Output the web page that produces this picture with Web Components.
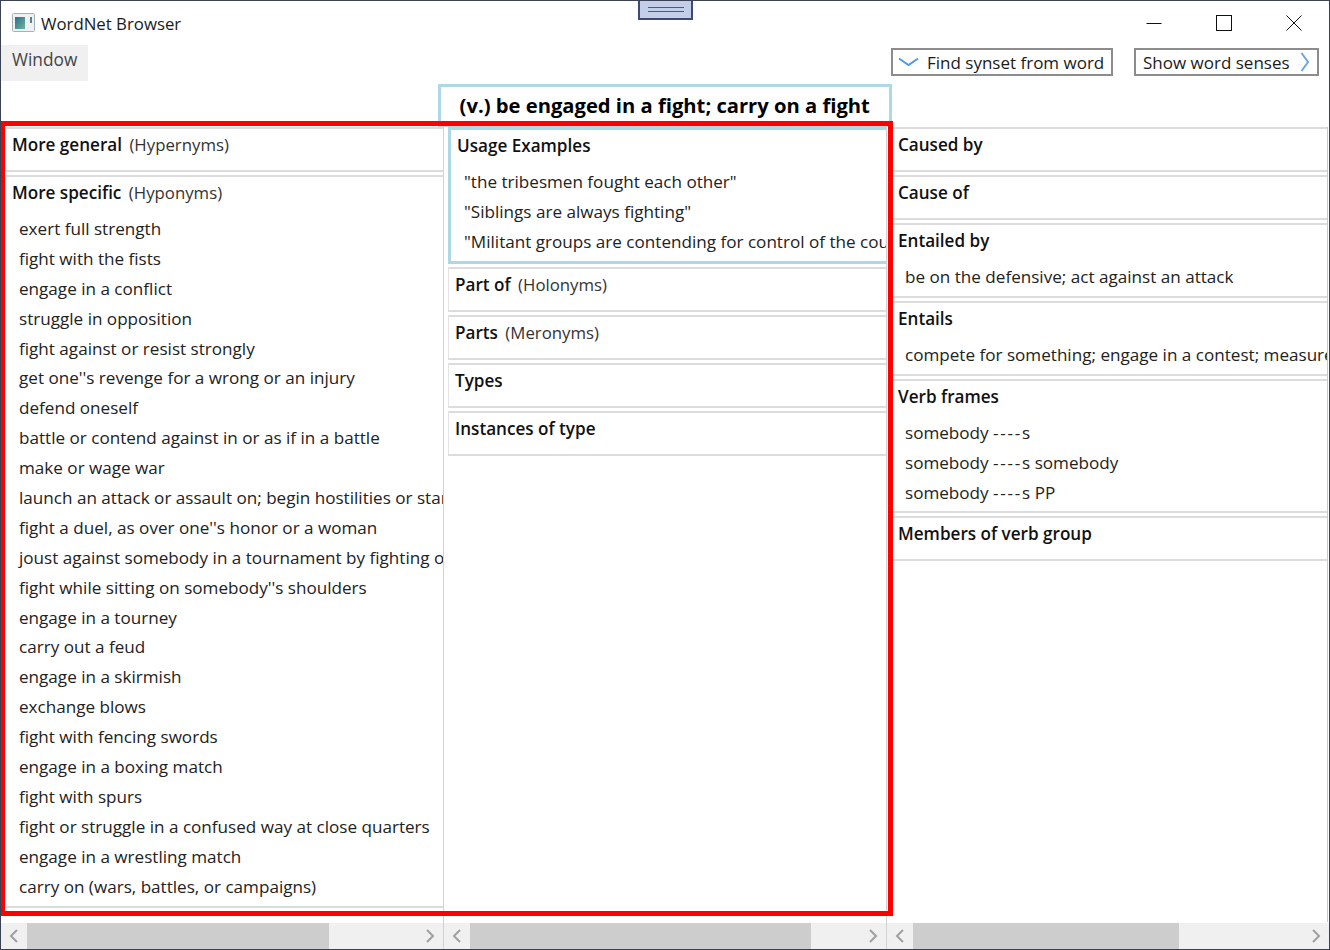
<!DOCTYPE html>
<html><head><meta charset="utf-8"><title>WordNet Browser</title>
<style>
html,body{margin:0;padding:0;background:#fff}
body{font-family:"Open Sans","Noto Sans",sans-serif;font-size:17.1px;color:#1a1a1a}
wb-item span{letter-spacing:1.75px}
</style></head><body>
<wb-app>
  <wb-titlebar slot="title">WordNet Browser</wb-titlebar>
  <wb-toolbar slot="toolbar"></wb-toolbar>
  <wb-col slot="left">
    <wb-section heading="More general" sub="(Hypernyms)"></wb-section>
    <wb-section style="padding-bottom:5px" heading="More specific" sub="(Hyponyms)">
      <wb-item>exert full strength</wb-item><wb-item>fight with the fists</wb-item><wb-item>engage in a conflict</wb-item><wb-item>struggle in opposition</wb-item><wb-item>fight against or resist strongly</wb-item><wb-item>get one''s revenge for a wrong or an injury</wb-item><wb-item>defend oneself</wb-item><wb-item>battle or contend against in or as if in a battle</wb-item><wb-item>make or wage war</wb-item><wb-item>launch an attack or assault on; begin hostilities or start warfare</wb-item><wb-item>fight a duel, as over one''s honor or a woman</wb-item><wb-item>joust against somebody in a tournament by fighting on horseback</wb-item><wb-item>fight while sitting on somebody''s shoulders</wb-item><wb-item>engage in a tourney</wb-item><wb-item>carry out a feud</wb-item><wb-item>engage in a skirmish</wb-item><wb-item>exchange blows</wb-item><wb-item>fight with fencing swords</wb-item><wb-item>engage in a boxing match</wb-item><wb-item>fight with spurs</wb-item><wb-item>fight or struggle in a confused way at close quarters</wb-item><wb-item>engage in a wrestling match</wb-item><wb-item>carry on (wars, battles, or campaigns)</wb-item>
    </wb-section>
  </wb-col>
  <wb-col slot="middle">
    <wb-section highlight heading="Usage Examples">
      <wb-item>"the tribesmen fought each other"</wb-item><wb-item>"Siblings are always fighting"</wb-item><wb-item>"Militant groups are contending for control of the country"</wb-item>
    </wb-section>
    <wb-section heading="Part of" sub="(Holonyms)"></wb-section>
    <wb-section heading="Parts" sub="(Meronyms)"></wb-section>
    <wb-section heading="Types"></wb-section>
    <wb-section heading="Instances of type"></wb-section>
  </wb-col>
  <wb-col slot="right">
    <wb-section heading="Caused by"></wb-section>
    <wb-section heading="Cause of"></wb-section>
    <wb-section heading="Entailed by"><wb-item>be on the defensive; act against an attack</wb-item></wb-section>
    <wb-section heading="Entails"><wb-item>compete for something; engage in a contest; measure oneself against others</wb-item></wb-section>
    <wb-section heading="Verb frames"><wb-item>somebody <span>----</span>s</wb-item><wb-item>somebody <span>----</span>s somebody</wb-item><wb-item>somebody <span>----</span>s PP</wb-item></wb-section>
    <wb-section heading="Members of verb group"></wb-section>
  </wb-col>
</wb-app>
<script>
function def(name, html, init){
  customElements.define(name, class extends HTMLElement{
    constructor(){super();this.attachShadow({mode:'open'}).innerHTML=html;}
    connectedCallback(){if(init)init(this);}
  });
}
def('wb-app',`<style>
:host{display:flex;flex-direction:column;box-sizing:border-box;width:1330px;height:950px;position:relative;overflow:hidden;border:1px solid #3a4152;background:#fff}
.head{height:43px;display:grid;grid-template-columns:437px 453.5px 1fr;flex:none}
.title{font-weight:700;font-size:20.2px;color:#000;box-sizing:border-box;height:43px;border:3px solid #add8e6;text-align:center;line-height:37px;white-space:nowrap}
.cols{flex:1;min-height:0;display:grid;grid-template-columns:443px 443px 1fr}
.handle{position:absolute;left:637px;top:-1px;width:55px;height:20px;box-sizing:border-box;background:#c3cee9;border:2px solid #3e4a75;border-top-width:1px;display:flex;flex-direction:column;justify-content:center;align-items:center}
.handle i{display:block;width:36px;border-top:1px solid #4f5a80;border-bottom:1px solid #4f5a80;box-sizing:border-box;height:5px}
.red{position:absolute;left:-1px;top:120px;width:893px;height:795px;box-sizing:border-box;border:5px solid #f00;pointer-events:none}
</style>
<slot name="title"></slot><slot name="toolbar"></slot>
<div class="head"><div></div><div class="title">(v.) be engaged in a fight; carry on a fight</div><div></div></div>
<div class="cols"><slot name="left"></slot><slot name="middle"></slot><slot name="right"></slot></div>
<div class="handle"><i></i></div>
<div class="red"></div>`);
def('wb-titlebar',`<style>
:host{display:flex;align-items:center;height:44px;flex:none;padding-left:11px;font-size:16.8px;color:#1b1b1b}
svg{display:block}
.ic{margin-right:5px;margin-top:-1px}
.t{flex:1}
.ctl{display:flex;gap:0}
.ctl span{width:70px;display:flex;justify-content:center}
</style>
<svg class="ic" width="24" height="20" viewBox="0 0 24 20"><defs><linearGradient id="g" x1="0" y1="0" x2="1" y2="1"><stop offset="0" stop-color="#2a6f8f"/><stop offset="1" stop-color="#6fb39a"/></linearGradient></defs><rect x=".5" y=".5" width="22" height="18" rx="1" fill="#eef1f3" stroke="#a9b0b5"/><rect x="3" y="4" width="10" height="12" fill="url(#g)"/><rect x="18" y="4" width="2" height="6" fill="#5a7f8d"/></svg>
<span class="t"><slot></slot></span>
<div class="ctl">
<span><svg width="16" height="16" viewBox="0 0 16 16"><path d="M.5 8.5h15" stroke="#111" fill="none"/></svg></span>
<span><svg width="16" height="16" viewBox="0 0 16 16"><rect x=".5" y=".5" width="15" height="15" stroke="#111" fill="none"/></svg></span>
<span><svg width="16" height="16" viewBox="0 0 16 16"><path d="M.5.5l15 15M15.500.5l-15 15" stroke="#111" fill="none"/></svg></span>
</div>`);
def('wb-toolbar',`<style>
:host{display:flex;align-items:flex-start;height:39px;flex:none;position:relative}
.menu{width:87px;height:36px;background:#f0f0f0;box-sizing:border-box;padding-left:11px;line-height:29px;font-size:17.3px;color:#444}
.sp{flex:1}
.btn{box-sizing:border-box;height:28px;border:2px solid #8c8c8c;display:flex;align-items:center;color:#1a1a1a;margin-top:3px;white-space:nowrap;font-size:17px}
.a{width:222px;padding-left:5px;gap:8px}
.b{width:185px;margin-left:21px;margin-right:10px;padding-left:7px;gap:10px}
svg{display:block;flex:none}
</style>
<div class="menu">Window</div><div class="sp"></div>
<div class="btn a"><svg width="21" height="10" viewBox="0 0 21 10"><path d="M1 1.500l9.500 6.500L20 1.500" fill="none" stroke="#4d9be8" stroke-width="2"/></svg><span>Find synset from word</span></div>
<div class="btn b"><span>Show word senses</span><svg width="10" height="20" viewBox="0 0 10 20"><path d="M1.500 1l6.500 9-6.500 9" fill="none" stroke="#6aa5e6" stroke-width="2"/></svg></div>`);
def('wb-col',`<style>
:host{display:flex;flex-direction:column;min-width:0;height:100%;border-right:1px solid #d2d2d2;box-sizing:border-box}
:host([slot="right"]){border-right:none}
:host([slot="right"]) .v{border-right:1px solid #c8c8c8;margin-right:1px}
.v{flex:1;min-height:0;overflow:hidden;padding-left:4px;display:flex;flex-direction:column;gap:3px}
.bar{flex:none;height:26px;background:#f0f0f0;display:flex;margin-top:1px}
.arr{width:26px;display:flex;align-items:center;justify-content:center;flex:none}
.th{background:#cdcdcd;height:100%}
.sp{flex:1}
</style>
<div class="v"><slot></slot></div>
<div class="bar"><div class="arr"><svg width="10" height="14" viewBox="0 0 10 14"><path d="M8 1L2 7l6 6" fill="none" stroke="#a0a0a0" stroke-width="2"/></svg></div><div class="th"></div><div class="sp"></div><div class="arr"><svg width="10" height="14" viewBox="0 0 10 14"><path d="M2 1l6 6-6 6" fill="none" stroke="#a0a0a0" stroke-width="2"/></svg></div></div>`,
el=>{const w={left:302,middle:341,right:266}[el.slot];el.shadowRoot.querySelector('.th').style.width=w+'px';});
def('wb-section',`<style>
:host{display:block;flex:none;box-sizing:border-box;border:1px solid #e3e3e3;border-top:2px solid #dcdcdc;border-bottom:2px solid #dcdcdc;border-right:none;padding:0 0 4px 6px;overflow:hidden;white-space:nowrap}
:host([highlight]){border:3px solid #add8e6;border-right:none;padding-left:6px}
.h{height:37px;line-height:32px}
:host([highlight]) .h{height:37px;line-height:31px}
b{font-weight:600;color:#111}
.s{margin-left:3px;color:#333;font-size:16.8px}
</style><div class="h"><b></b> <span class="s"></span></div><slot></slot>`,
el=>{el.shadowRoot.querySelector('b').textContent=el.getAttribute('heading');el.shadowRoot.querySelector('.s').textContent=el.getAttribute('sub')||'';});
def('wb-item',`<style>:host{display:block;height:29.9px;line-height:29.9px;padding-left:7px;color:#222}</style><slot></slot>`);
</script>
</body></html>
